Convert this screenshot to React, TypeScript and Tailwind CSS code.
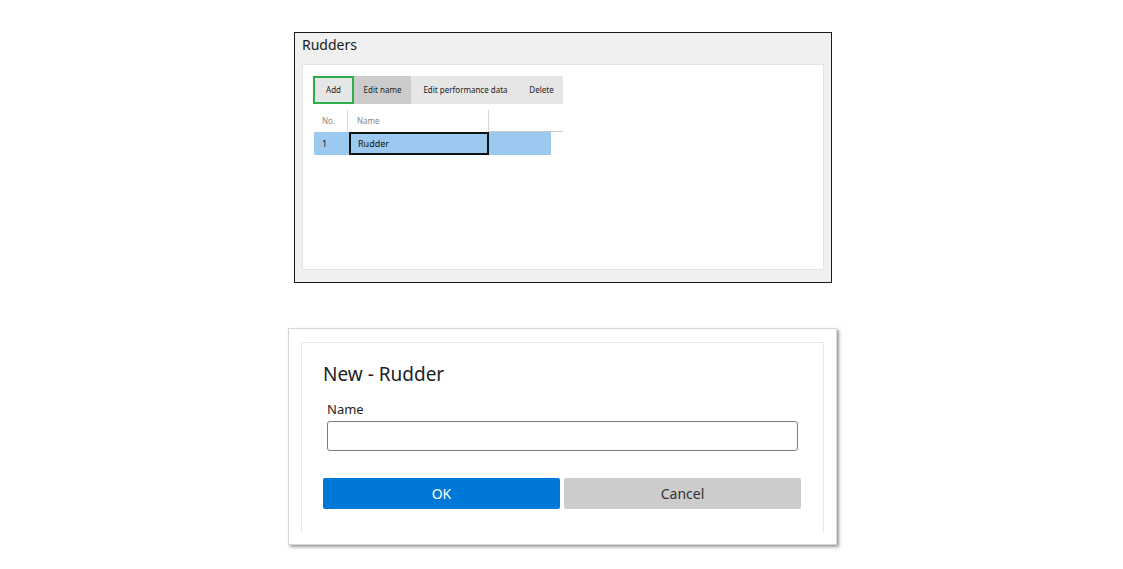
import React from 'react';

const font = { fontFamily: '"Noto Sans", "Open Sans", sans-serif' };

function RuddersWindow() {
  return (
    <div className="w-[538px] h-[251px] border border-[#1a1a1a] bg-[#f0f0f0] flex flex-col px-[7px] pb-[12px]">
      <div className="h-[31px] pt-[2px] text-[14px] leading-[20px] text-[#1a1a1a]">Rudders</div>
      <div className="flex-1 bg-white border border-[#e3e3e3] pl-[10px] pt-[11px] flex flex-col">
        {/* Toolbar */}
        <div className="flex h-[29px] text-[8px] leading-[10px] text-[#222] pb-[1px]">
          <div className="w-[41px] bg-[#e6e6e6] border-2 border-[#2db04a] flex items-center justify-center">Add</div>
          <div className="w-[57px] bg-[#cccccc] flex items-center justify-center">Edit name</div>
          <div className="w-[109px] bg-[#e6e6e6] flex items-center justify-center">Edit performance data</div>
          <div className="w-[43px] bg-[#e6e6e6] flex items-center justify-center">Delete</div>
        </div>

        {/* Table */}
        <div className="mt-[5px] ml-[1px] flex flex-col">
          <div className="flex h-[22px] text-[8px] text-[#888]">
            <div className="w-[34px] pl-[8px] flex items-center border-r border-[#d4d4d4]">No.</div>
            <div className="w-[141px] pl-[9px] flex items-center border-r border-[#d4d4d4]">Name</div>
            <div className="w-[74px] border-b border-[#c8c8c8]"></div>
          </div>
          <div className="flex h-[23px] w-[237px] bg-[#9bc9ef] text-[9px] text-[#111]">
            <div className="w-[35px] pl-[8px] flex items-center">1</div>
            <div className="w-[140px] border-2 border-[#111] pl-[7px] flex items-center">Rudder</div>
          </div>
        </div>
      </div>
    </div>
  );
}

function NewRudderDialog() {
  return (
    <div className="w-[549px] h-[217px] bg-white border border-[#d6d6d6] shadow-[2px_2px_3px_rgba(0,0,0,0.4)] pl-[12px] pr-[12px] pt-[13px] pb-[12px] flex">
      <div className="flex-1 border-l border-t border-r border-[#e6e6e6] pl-[21px] flex flex-col">
        <div className="mt-[18px] text-[19px] leading-[26px] text-[#222]">New - Rudder</div>
        <div className="mt-[13px] ml-[4px] text-[13px] leading-[18px] text-[#222]">Name</div>
        <input
          type="text"
          className="mt-[3px] ml-[4px] w-[471px] h-[30px] border border-[#7d7d7d] rounded-[3px] outline-none"
        />
        <div className="mt-[27px] flex gap-[4px]">
          <button className="w-[237px] h-[31px] bg-[#0078d7] text-white text-[14px] rounded-[2px]">OK</button>
          <button className="w-[237px] h-[31px] bg-[#cccccc] text-[#333] text-[14px] rounded-[2px]">Cancel</button>
        </div>
      </div>
    </div>
  );
}

export default function App() {
  return (
    <div className="w-[1123px] h-[569px] bg-white overflow-hidden" style={font}>
      <div className="pt-[32px] pl-[294px]">
        <RuddersWindow />
      </div>
      <div className="pt-[45px] pl-[288px]">
        <NewRudderDialog />
      </div>
    </div>
  );
}
